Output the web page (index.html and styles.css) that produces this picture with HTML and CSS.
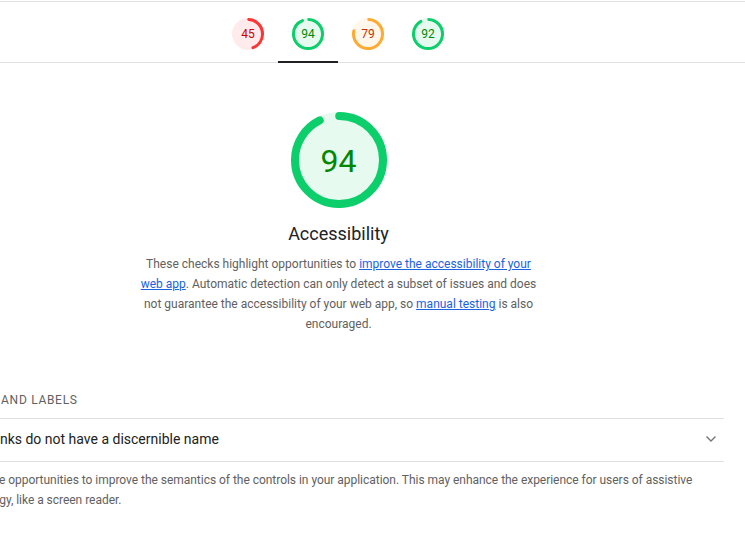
FILE: index.html
```html
<!DOCTYPE html>
<html lang="en">
<head>
<meta charset="utf-8">
<title>Lighthouse Report</title>
<link rel="stylesheet" href="styles.css">
</head>
<body>
<div class="report">
  <nav class="sticky-header">
    <div class="tab">
      <div class="mini-gauge fail">
        <svg viewBox="0 0 32 32" width="32" height="32">
          <circle class="base" cx="16" cy="16" r="14.5" stroke-width="3"/>
          <circle class="arc" cx="16" cy="16" r="14.5" stroke-width="3" stroke-dasharray="39.5 91.106" transform="rotate(-87.04 16 16)"/>
        </svg>
        <span class="mini-num">45</span>
      </div>
    </div>
    <div class="tab active">
      <div class="mini-gauge pass">
        <svg viewBox="0 0 32 32" width="32" height="32">
          <circle class="base" cx="16" cy="16" r="14.5" stroke-width="3"/>
          <circle class="arc" cx="16" cy="16" r="14.5" stroke-width="3" stroke-dasharray="84.14 91.106" transform="rotate(-87.04 16 16)"/>
        </svg>
        <span class="mini-num">94</span>
      </div>
    </div>
    <div class="tab">
      <div class="mini-gauge average">
        <svg viewBox="0 0 32 32" width="32" height="32">
          <circle class="base" cx="16" cy="16" r="14.5" stroke-width="3"/>
          <circle class="arc" cx="16" cy="16" r="14.5" stroke-width="3" stroke-dasharray="70.47 91.106" transform="rotate(-87.04 16 16)"/>
        </svg>
        <span class="mini-num">79</span>
      </div>
    </div>
    <div class="tab">
      <div class="mini-gauge pass">
        <svg viewBox="0 0 32 32" width="32" height="32">
          <circle class="base" cx="16" cy="16" r="14.5" stroke-width="3"/>
          <circle class="arc" cx="16" cy="16" r="14.5" stroke-width="3" stroke-dasharray="82.32 91.106" transform="rotate(-87.04 16 16)"/>
        </svg>
        <span class="mini-num">92</span>
      </div>
    </div>
  </nav>

  <section class="category">
    <div class="category-header">
      <div class="big-gauge pass">
        <svg viewBox="0 0 96 96" width="96" height="96">
          <circle class="base" cx="48" cy="48" r="44" stroke-width="8"/>
          <circle class="arc" cx="48" cy="48" r="44" stroke-width="8" stroke-dasharray="255.87 276.46" transform="rotate(-89.74 48 48)"/>
        </svg>
        <span class="big-num">94</span>
      </div>
      <div class="gauge-label">Accessibility</div>
      <p class="category-desc">These checks highlight opportunities to <a href="#">improve the accessibility of your web app</a>. Automatic detection can only detect a subset of issues and does not guarantee the accessibility of your web app, so <a href="#">manual testing</a> is also encouraged.</p>
    </div>

    <div class="audit-group">
      <div class="group-title">Names and labels</div>
      <div class="audit">
        <span class="fail-icon">
          <svg viewBox="0 0 12 12" width="12" height="12"><polygon points="6,1 11.5,11 0.5,11" fill="#ff3333"/></svg>
        </span>
        <span class="audit-title">Links do not have a discernible name</span>
        <svg class="chevron" viewBox="0 0 12 8" width="12" height="8"><polyline points="1.5,1.5 6,6 10.5,1.5" fill="none" stroke="#757575" stroke-width="1.4"/></svg>
      </div>
      <p class="group-desc">These are opportunities to improve the semantics of the controls in your application. This may enhance the experience for users of assistive technology, like a screen reader.</p>
    </div>
  </section>
</div>
</body>
</html>
```

FILE: styles.css
```css
* { box-sizing: border-box; }

html, body {
  margin: 0;
  padding: 0;
  background: #ffffff;
  overflow: hidden;
}

body {
  font-family: Roboto, "Liberation Sans", Arial, sans-serif;
  color: #212121;
}

.report {
  width: 860px;
  margin-left: -92px;
  padding-top: 1px;
}

.sticky-header {
  display: flex;
  justify-content: center;
  height: 62px;
  border-top: 1px solid #e0e0e0;
  border-bottom: 1px solid #e0e0e0;
}

.tab {
  width: 60px;
  height: 61px;
  margin-bottom: -1px;
  padding-top: 4px;
  display: flex;
  align-items: center;
  justify-content: center;
  border-bottom: 2px solid transparent;
}

.tab.active {
  border-bottom-color: #202124;
}

.mini-gauge,
.big-gauge {
  display: grid;
  place-items: center;
}

.mini-gauge > *,
.big-gauge > * {
  grid-area: 1 / 1;
}

.mini-gauge svg,
.big-gauge svg {
  display: block;
}

.arc {
  fill: none;
  stroke-linecap: round;
}

.fail .base { fill: #ffebeb; stroke: #ffebeb; }
.fail .arc { stroke: #ff3333; }
.fail { color: #cc0000; }

.average .base { fill: #fff7eb; stroke: #fff7eb; }
.average .arc { stroke: #ffaa33; }
.average { color: #c33300; }

.pass .base { fill: #e7faf0; stroke: #e7faf0; }
.pass .arc { stroke: #0cce6b; }
.pass { color: #008800; }

.mini-num {
  font-size: 12px;
  line-height: 14px;
  padding-top: 1px;
}

.category {
  padding: 0 44px 0 45px;
}

.category-header {
  display: flex;
  flex-direction: column;
  align-items: center;
  padding-top: 49px;
}

.big-num {
  font-size: 32px;
  line-height: 36px;
  padding-top: 1px;
}

.gauge-label {
  margin-top: 14px;
  font-size: 18px;
  line-height: 24px;
  color: #202124;
}

.category-desc {
  margin: 8px 0 0;
  max-width: 400px;
  text-align: center;
  font-size: 12px;
  line-height: 20px;
  color: #616161;
}

.category-desc a {
  color: #1b62e0;
  text-decoration: underline;
}

.audit-group {
  margin-top: 56px;
}

.group-title {
  font-size: 12px;
  line-height: 20px;
  letter-spacing: 0.7px;
  text-transform: uppercase;
  color: #616161;
  padding-bottom: 8px;
  border-bottom: 1px solid #e0e0e0;
}

.audit {
  display: flex;
  align-items: center;
  padding: 10px 0 12px;
  border-bottom: 1px solid #e0e0e0;
}

.fail-icon {
  display: flex;
  margin: 0 12px 0 12px;
}

.audit-title {
  flex: 1;
  font-size: 14px;
  line-height: 20px;
  color: #212121;
}

.chevron {
  display: block;
  margin-right: 7px;
}

.group-desc {
  margin: 8px 0 0;
  font-size: 12px;
  line-height: 20px;
  letter-spacing: -0.03px;
  color: #616161;
}
```
